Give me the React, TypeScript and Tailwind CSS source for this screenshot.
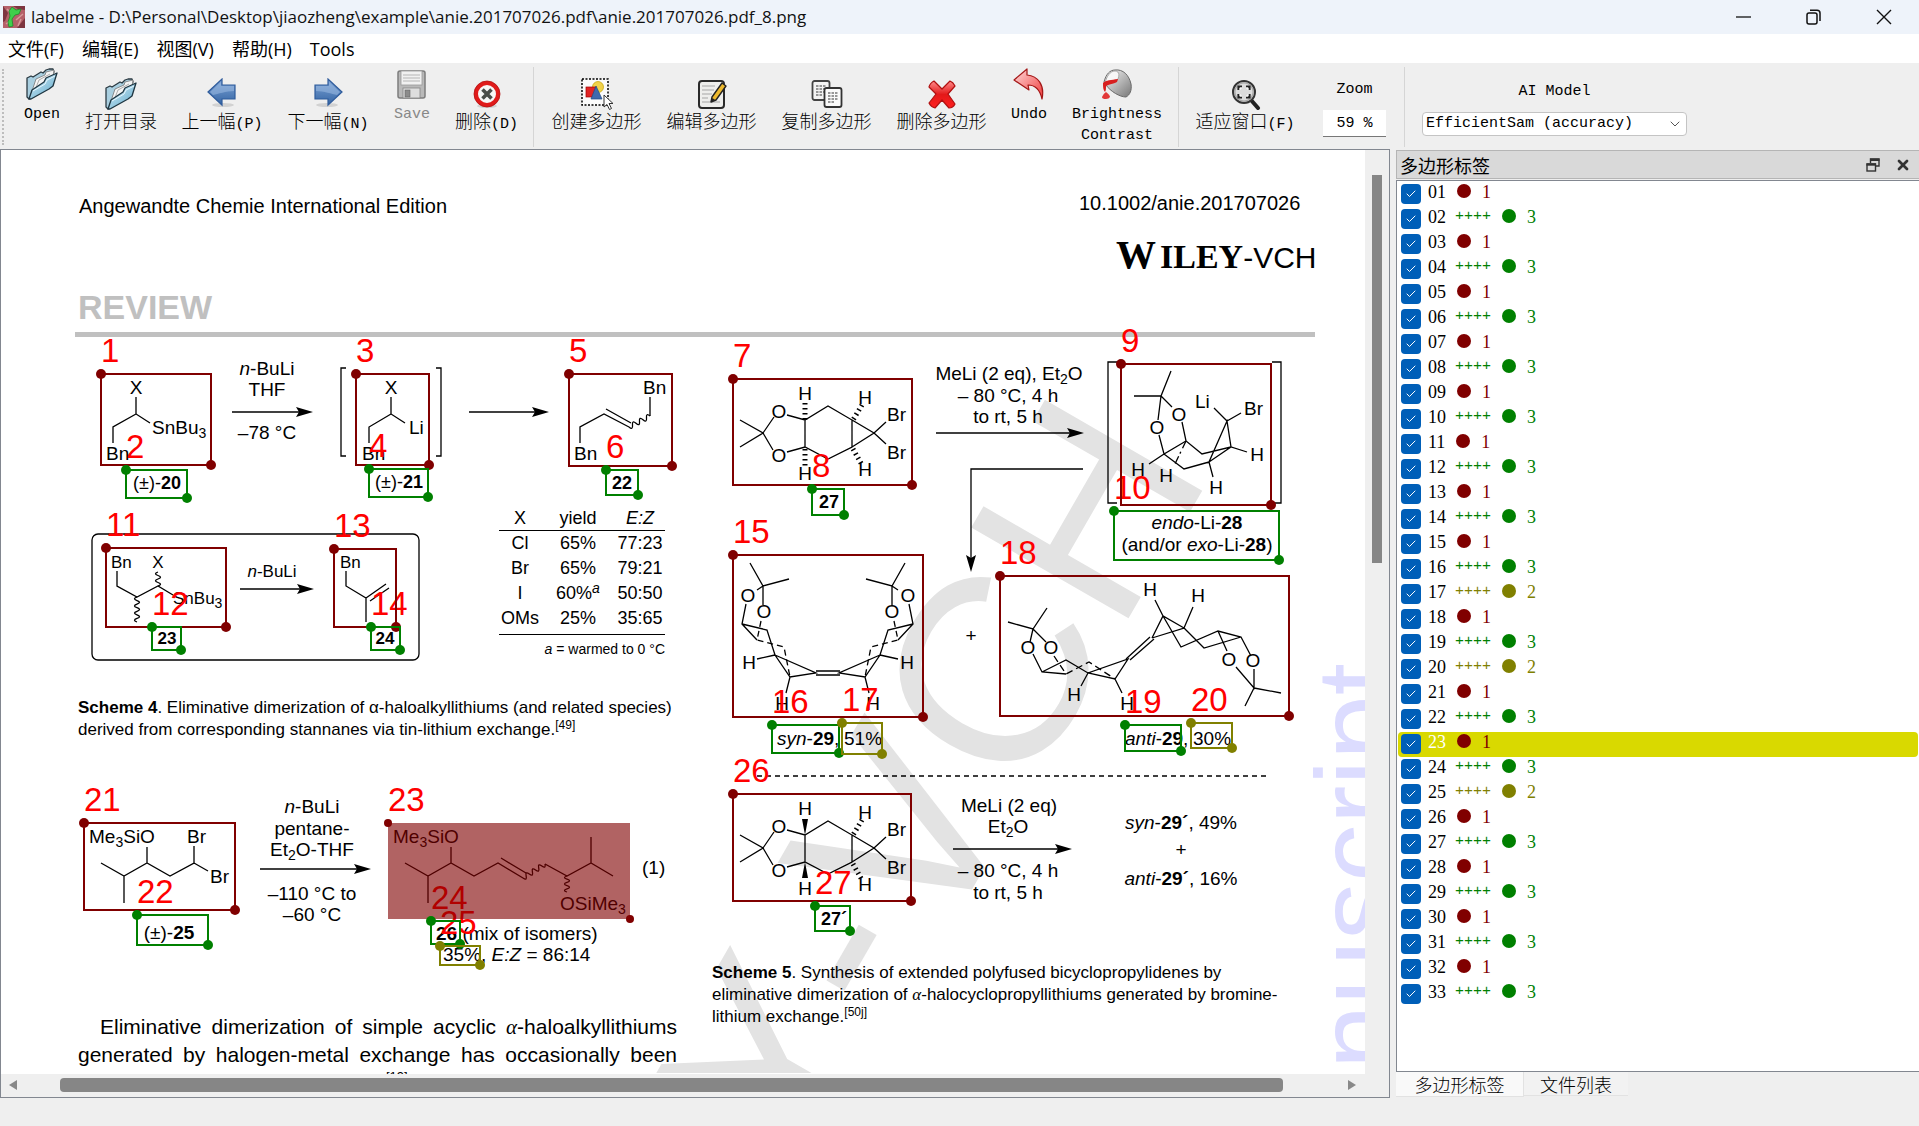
import React from "react";
import { Check, ChevronDown, X } from "lucide-react";

/* ------------------------------------------------------------------ */
/* Toolbar icons                                                        */
/* ------------------------------------------------------------------ */

function FolderIcon() {
  return (
    <svg viewBox="0 0 32 32" className="size-8">
      <defs>
        <linearGradient id="folder" x1="0" y1="0" x2="1" y2="1">
          <stop offset="0" stopColor="#d6eef8" />
          <stop offset="1" stopColor="#5fa9cb" />
        </linearGradient>
      </defs>
      <path d="M1 10 L5 8 L7 9 L15 4 L17 5 L20 2 L23 1 L27 1 L28 4 L3 31 L1 29 Z" fill="#a9cfe0" stroke="#2b3a42" strokeWidth="1.3" strokeLinejoin="round" />
      <path d="M5 26 L10 11 L19 7 L20 4 L28 2 L27 10 L8 22 Z" fill="#f4f4f4" stroke="#777" strokeWidth="0.8" />
      <path d="M9 22 L13 12 L24 6" fill="none" stroke="#999" strokeWidth="0.8" />
      <path d="M3 31 L6 22 L18 14 L20 10 L31 5 L27 18 L23 21 L5 31 Z" fill="url(#folder)" stroke="#1f3540" strokeWidth="1.3" strokeLinejoin="round" />
      <path d="M7 23 L19 16 L21 12 L29 8" fill="none" stroke="#e9f8ff" strokeWidth="1" />
    </svg>
  );
}

function ArrowIcon({ flip = false }: { flip?: boolean }) {
  return (
    <svg viewBox="0 0 32 32" className={flip ? "size-8 -scale-x-100" : "size-8"}>
      <defs>
        <linearGradient id="blueArrow" x1="0" y1="0" x2="0" y2="1">
          <stop offset="0" stopColor="#7fa4d6" />
          <stop offset="1" stopColor="#3465a4" />
        </linearGradient>
      </defs>
      <ellipse cx="17" cy="27" rx="11" ry="2" fill="#000" opacity="0.12" />
      <path d="M2 14 L16 1 L16 7 L29 7 L29 21 L16 21 L16 27 Z" fill="url(#blueArrow)" stroke="#2f5c9c" strokeWidth="1.2" />
      <path d="M4 14 L15 4 L15 8 L28 8 L28 13 C20 13 12 16 7 17 Z" fill="#9dbbe2" opacity="0.55" />
    </svg>
  );
}

function SaveIcon() {
  return (
    <svg viewBox="0 0 32 32" className="size-8">
      <rect x="2" y="3" width="27" height="27" rx="2" fill="#b9b9b9" stroke="#7d7d7d" strokeWidth="1.5" />
      <rect x="5" y="3" width="21" height="14" fill="#f1f1f1" stroke="#999" strokeWidth="0.8" />
      <path d="M7 7 H24 M7 10 H24 M7 13 H24" stroke="#b5b5b5" strokeWidth="1" />
      <rect x="7" y="20" width="17" height="10" fill="#dedede" stroke="#858585" strokeWidth="0.8" />
      <rect x="9" y="22" width="5" height="7" fill="#8b8b8b" stroke="#666" strokeWidth="0.6" />
    </svg>
  );
}

function CancelIcon() {
  return (
    <svg viewBox="0 0 32 32" className="size-8">
      <ellipse cx="16" cy="28" rx="10" ry="2" fill="#000" opacity="0.12" />
      <circle cx="16" cy="16" r="11" fill="#f7f7f7" stroke="#e01b1b" strokeWidth="4" />
      <circle cx="16" cy="16" r="13" fill="none" stroke="#b30f0f" strokeWidth="0.8" />
      <path d="M11.5 11.5 L20.5 20.5 M20.5 11.5 L11.5 20.5" stroke="#4a4d49" strokeWidth="3.6" />
    </svg>
  );
}

function CreateIcon() {
  return (
    <svg viewBox="0 0 32 32" className="size-8">
      <rect x="1" y="1" width="26" height="26" fill="#fbfbfb" stroke="#000" strokeWidth="1.5" strokeDasharray="2 1.5" />
      <circle cx="17" cy="9" r="5.5" fill="#f0d14a" stroke="#c4a000" strokeWidth="0.7" />
      <rect x="5" y="9" width="10" height="10" fill="#e02424" stroke="#a40000" strokeWidth="0.7" />
      <path d="M15 8 L21 21 H10 Z" fill="#3f69ad" stroke="#204a87" strokeWidth="0.7" />
      <path d="M23 17 V29 L26 26.5 L28.5 31.5 L30.5 30.5 L28 25.5 H32 Z" fill="#fff" stroke="#333" strokeWidth="1" />
    </svg>
  );
}

function EditIcon() {
  return (
    <svg viewBox="0 0 32 32" className="size-8">
      <rect x="3" y="3" width="25" height="27" rx="3" fill="#eeeeec" stroke="#2a2a2a" strokeWidth="2" />
      <path d="M6 8 H19 M6 12 H18 M6 16 H16 M6 20 H12 M6 24 H24" stroke="#a5a5a5" strokeWidth="1.2" />
      <path d="M16 19 L26 5 L30 8 L20 22 L15 24 Z" fill="#edb92e" stroke="#222" strokeWidth="1.4" strokeLinejoin="round" />
      <path d="M15 24 L16.5 20 L19 22 Z" fill="#222" />
    </svg>
  );
}

function CopyIcon() {
  return (
    <svg viewBox="0 0 32 32" className="size-8">
      <rect x="1.5" y="3" width="17" height="19" rx="2" fill="#f3f3f3" stroke="#444" strokeWidth="1.8" />
      <path d="M5 8 H15 M5 11 H15 M5 14 H15 M5 17 H12" stroke="#777" strokeWidth="1.3" strokeDasharray="2.5 1" />
      <rect x="13.5" y="10" width="17" height="19" rx="2" fill="#fafafa" stroke="#333" strokeWidth="1.8" />
      <path d="M17 15 H27 M17 18 H27 M17 21 H27 M17 24 H24" stroke="#777" strokeWidth="1.3" strokeDasharray="2.5 1" />
    </svg>
  );
}

function DeleteIcon() {
  return (
    <svg viewBox="0 0 32 32" className="size-8">
      <defs>
        <linearGradient id="redCross" x1="0" y1="0" x2="0" y2="1">
          <stop offset="0" stopColor="#ff8c8c" />
          <stop offset="0.5" stopColor="#e31919" />
          <stop offset="1" stopColor="#ff1f1f" />
        </linearGradient>
      </defs>
      <path d="M8 3 Q4 5 3 9 L10 16 L3 25 Q5 29 9 30 L16 22 L23 30 Q27 30 29 26 L22 16 L29 8 Q27 4 24 3 L16 11 Z" fill="url(#redCross)" stroke="#b01010" strokeWidth="1.2" strokeLinejoin="round" />
    </svg>
  );
}

function UndoIcon() {
  return (
    <svg viewBox="0 0 32 32" className="size-8">
      <defs>
        <linearGradient id="undo" x1="0" y1="0" x2="1" y2="1">
          <stop offset="0" stopColor="#ffd9d9" />
          <stop offset="1" stopColor="#ef3b3b" />
        </linearGradient>
      </defs>
      <path d="M1 12 L14 1 L14 7 C25 8 32 17 29 31 C27 22 22 17 15 17 L16 22 Z" fill="url(#undo)" stroke="#a31616" strokeWidth="1.2" strokeLinejoin="round" />
    </svg>
  );
}

function BucketIcon() {
  return (
    <svg viewBox="0 0 32 32" className="size-8">
      <defs>
        <linearGradient id="bucket" x1="0" y1="0" x2="1" y2="1">
          <stop offset="0" stopColor="#fafafa" />
          <stop offset="1" stopColor="#777" />
        </linearGradient>
      </defs>
      <path d="M3 14 C5 6 9 2 14 2 C22 1 28 7 30 16 C31 22 29 27 25 29 C19 29 10 24 4 16 Z" fill="url(#bucket)" stroke="#6a6a6a" strokeWidth="1" />
      <path d="M4 16 C5 9 9 3 14 3 C19 3 19 9 15 14 Z" fill="#f7f7f7" stroke="#999" strokeWidth="0.8" />
      <path d="M2 15 C5 12 10 12 17 11 L16 14 C12 16 9 16 5 18 C5 21 5 22 4 24 C2 22 2 19 2 15 Z" fill="#d81f1f" />
      <path d="M5 24 Q9 27 9 29 Q8 31 5 31 Q1 31 1 29 Q2 26 5 24 Z" fill="#e23838" />
    </svg>
  );
}

function FitIcon() {
  return (
    <svg viewBox="0 0 32 32" className="size-8">
      <path d="M22 22 L29 30" stroke="#222" strokeWidth="4" strokeLinecap="round" />
      <circle cx="15" cy="14" r="11" fill="#dcdcdc" stroke="#333" strokeWidth="2" />
      <circle cx="15" cy="14" r="9.2" fill="none" stroke="#aaa" strokeWidth="1.4" />
      <path d="M9.5 12 V8.5 H13 M17 8.5 H20.5 V12 M20.5 16 V19.5 H17 M13 19.5 H9.5 V16" fill="none" stroke="#222" strokeWidth="2.2" />
      <path d="M11 12 V10 H13 M17 10 H19 V12 M19 16 V18 H17 M13 18 H11 V16" fill="none" stroke="#fff" strokeWidth="1" />
    </svg>
  );
}

function LogoIcon() {
  return (
    <svg viewBox="0 0 22 22" className="size-[22px]">
      <rect width="22" height="22" fill="#b5616a" />
      <path d="M0 0 L5 7 L2 15 L0 16 Z M10 0 L22 0 L22 4 L15 3 Z M14 22 L22 12 L22 22 Z" fill="#7d3540" />
      <path d="M4 3 L11 10 M13 14 L20 8 M3 18 L8 14 M15 20 L18 13" stroke="#d79a9a" strokeWidth="1.5" />
      <path d="M9 1 L13 4 L18 3 L16 8 L12 9 L9 13 L10 20 L6 21 L5 16 L7 10 L6 5 Z" fill="#3fd04b" stroke="#1f8a2c" strokeWidth="0.8" />
    </svg>
  );
}

/* ------------------------------------------------------------------ */
/* Window chrome                                                        */
/* ------------------------------------------------------------------ */

function Mixed({ text }: { text: string }) {
  return (
    <>
      {text.split(/([\u4e00-\u9fff]+)/).map((part, i) =>
        i % 2 ? (
          <span key={i} className="font-['Noto_Sans_CJK_SC',sans-serif] text-[18px] font-light">{part}</span>
        ) : (
          part
        ),
      )}
    </>
  );
}

function TitleBar() {
  return (
    <header className="flex h-[34px] shrink-0 items-center bg-[#eef3fa] pl-[3px]">
      <LogoIcon />
      <h1 className="ml-1.5 flex-1 font-['Open_Sans',sans-serif] text-[17px] leading-6 text-[#111]">
        labelme - D:\Personal\Desktop\jiaozheng\example\anie.201707026.pdf\anie.201707026.pdf_8.png
      </h1>
      <button aria-label="Minimize" className="flex w-[70px] justify-center">
        <svg viewBox="0 0 16 16" className="size-4"><path d="M0 8 H15" stroke="#111" strokeWidth="1.3" /></svg>
      </button>
      <button aria-label="Restore" className="flex w-[70px] justify-center">
        <svg viewBox="0 0 16 16" className="size-4" fill="none" stroke="#111" strokeWidth="1.5">
          <rect x="1" y="4" width="10" height="11" rx="2" />
          <path d="M4 1.2 H11 Q14 1.2 14 4 V12" />
        </svg>
      </button>
      <button aria-label="Close" className="flex w-[70px] justify-center">
        <svg viewBox="0 0 16 16" className="size-4"><path d="M1 1 L15 15 M15 1 L1 15" stroke="#111" strokeWidth="1.4" /></svg>
      </button>
    </header>
  );
}

function MenuBar() {
  return (
    <nav className="flex h-[31px] shrink-0 items-center gap-[18px] border-b-2 border-[#efefef] bg-white pl-2 font-['Open_Sans','Noto_Sans_CJK_SC',sans-serif] text-[18px] leading-6 text-black">
      {["文件(F)", "编辑(E)", "视图(V)", "帮助(H)", "Tools"].map((m) => (
        <button key={m} className="whitespace-nowrap">{m}</button>
      ))}
    </nav>
  );
}

type ToolProps = { icon: React.ReactNode; label: string; width: string; high?: boolean; disabled?: boolean };

function Tool({ icon, label, width, high = false, disabled = false }: ToolProps) {
  return (
    <button
      disabled={disabled}
      className={`flex shrink-0 flex-col items-center leading-[21px] ${high ? "gap-1 pt-[3px]" : "gap-0 pt-[13px]"} ${disabled ? "text-[#888]" : "text-black"} ${width}`}
    >
      {icon}
      <span className="whitespace-pre text-center"><Mixed text={label} /></span>
    </button>
  );
}

function Separator() {
  return <div className="my-0.5 w-px shrink-0 bg-[#d5d5d5]" />;
}

function Toolbar() {
  return (
    <div role="toolbar" className="flex h-[84px] shrink-0 items-stretch bg-[#efefef] font-['Liberation_Mono',monospace] text-[15px]">
      <div className="my-1 ml-0.5 w-3 shrink-0 border-l-2 border-dotted border-[#bdbdbd]" />
      <div className="flex items-start">
        <Tool icon={<FolderIcon />} label="Open" width="w-[56px]" high />
        <Tool icon={<FolderIcon />} label="打开目录" width="w-[102px]" />
        <Tool icon={<ArrowIcon />} label="上一幅(P)" width="w-[100px]" />
        <Tool icon={<ArrowIcon flip />} label="下一幅(N)" width="w-[112px]" />
        <Tool icon={<SaveIcon />} label="Save" width="w-[56px]" high disabled />
        <Tool icon={<CancelIcon />} label="删除(D)" width="w-[93px]" />
      </div>
      <Separator />
      <div className="flex items-start pl-[5px] pr-[3px]">
        <Tool icon={<CreateIcon />} label="创建多边形" width="w-[115px]" />
        <Tool icon={<EditIcon />} label="编辑多边形" width="w-[115px]" />
        <Tool icon={<CopyIcon />} label="复制多边形" width="w-[115px]" />
        <Tool icon={<DeleteIcon />} label="删除多边形" width="w-[115px]" />
        <Tool icon={<UndoIcon />} label="Undo" width="w-[60px]" high />
        <Tool icon={<BucketIcon />} label={"Brightness\nContrast"} width="w-[116px]" high />
      </div>
      <Separator />
      <div className="flex items-start pl-2">
        <Tool icon={<FitIcon />} label="适应窗口(F)" width="w-[116px]" />
      </div>
      <div className="ml-5 flex w-[63px] flex-col items-center pt-[13px]">
        <label htmlFor="zoom" className="leading-6">Zoom</label>
        <input id="zoom" defaultValue="59 %" className="mt-2 h-[27px] w-full border-b border-[#777] bg-white text-center outline-none" />
      </div>
      <div className="ml-[18px] flex"><Separator /></div>
      <div className="ml-[17px] flex w-[265px] flex-col items-center pt-[15px]">
        <label htmlFor="model" className="leading-6">AI Model</label>
        <div className="mt-2 grid w-full items-center">
          <select id="model" className="h-6 w-full appearance-none rounded-sm border border-[#c4c4c4] bg-white pl-[3px] outline-none [grid-area:1/1]">
            <option>EfficientSam (accuracy)</option>
          </select>
          <ChevronDown className="pointer-events-none mr-1 size-4 justify-self-end [grid-area:1/1]" strokeWidth={1.5} color="#555" />
        </div>
      </div>
    </div>
  );
}

/* ------------------------------------------------------------------ */
/* Chemistry drawing helpers                                            */
/* ------------------------------------------------------------------ */

type TextProps = { x: number; y: number; children: React.ReactNode; at?: "start" | "middle" | "end"; size?: string };

function T({ x, y, children, at = "start", size = "text-[19px]" }: TextProps) {
  return <text x={x} y={y} textAnchor={at} className={`fill-black ${size}`}>{children}</text>;
}

function Sub({ n }: { n: string }) {
  return <tspan dy="4" className="text-[14px]">{n}</tspan>;
}

const B = ({ children }: { children: React.ReactNode }) => <tspan className="font-bold">{children}</tspan>;
const I = ({ children }: { children: React.ReactNode }) => <tspan className="italic">{children}</tspan>;

function Arrow({ x1, x2, y }: { x1: number; x2: number; y: number }) {
  return (
    <>
      <path d={`M${x1} ${y} H${x2 - 12}`} />
      <path d={`M${x2} ${y} L${x2 - 17} ${y - 5} L${x2 - 14} ${y} L${x2 - 17} ${y + 5} Z`} fill="#000" stroke="none" />
    </>
  );
}

function Wavy({ x1, y1, x2, y2, n }: { x1: number; y1: number; x2: number; y2: number; n: number }) {
  const dx = (x2 - x1) / n;
  const dy = (y2 - y1) / n;
  const len = Math.hypot(dx, dy);
  let d = `M${x1} ${y1}`;
  for (let i = 0; i < n; i++) {
    const s = i % 2 ? -5 : 5;
    const cx = x1 + dx * (i + 0.5) - (dy / len) * s;
    const cy = y1 + dy * (i + 0.5) + (dx / len) * s;
    d += ` Q${cx} ${cy} ${x1 + dx * (i + 1)} ${y1 + dy * (i + 1)}`;
  }
  return <path d={d} />;
}

function Acetonide({ dy, wedge }: { dy: number; wedge: boolean }) {
  return (
    <g transform={`translate(0 ${dy})`}>
      <path d="M740 420 L763 433 L740 447 M763 433 L774 417 M763 433 L773 450 M787 415 L805 420 L828 406 L852 420 L852 447 L828 459 L805 447 L787 452 M805 420 V447 M852 420 L874 433 L852 447 M874 433 L886 422 M874 433 L886 444" />
      {wedge ? (
        <path d="M805 420 L802 404 H808 Z M805 447 L802 463 H808 Z" fill="#000" stroke="none" />
      ) : (
        <path d="M805 403 V420 M805 449 V466" strokeWidth="5" strokeDasharray="1.5 3.5" />
      )}
      <path d="M862 405 L853 420 M853 449 L862 465" strokeWidth="5" strokeDasharray="1.5 3.5" />
      <g stroke="none">
        <T x={805} y={400} at="middle">H</T>
        <T x={865} y={404} at="middle">H</T>
        <T x={805} y={480} at="middle">H</T>
        <T x={865} y={476} at="middle">H</T>
        <T x={779} y={418} at="middle">O</T>
        <T x={779} y={462} at="middle">O</T>
        <T x={887} y={421}>Br</T>
        <T x={887} y={459}>Br</T>
      </g>
    </g>
  );
}

const SYN_HALF =
  "M750 563 L763 586 L789 579 M763 586 L757 590 M763 586 V605 M746 604 L742 624 L757 640 M742 624 L767 630 L775 655 L790 677 L816 673 L775 655 M775 655 L757 659 M790 677 L786 693";

function Watermarks() {
  return (
    <>
      <text x={1213} y={472} textAnchor="end" transform="rotate(-60 1213 472)" className="fill-[#e3e3e3] text-[264px] [font-kerning:none]">WILEY-VCH</text>
      <text x={1398} y={663} textAnchor="end" transform="rotate(-90 1398 663)" className="fill-[#dcdcff] text-[116px]">Accepted Manuscript</text>
    </>
  );
}

function Scheme4() {
  return (
    <g fill="none" stroke="#000" strokeWidth="1.3">
      <path d="M136 397 V414 L150 423 M136 414 L113 427 V443" />
      <Arrow x1={232} x2={313} y={412} />
      <path d="M346 368 H341 V456 H346 M436 368 H441 V456 H436" />
      <path d="M391 397 V414 L405 423 M391 414 L369 427 V443" />
      <Arrow x1={469} x2={549} y={412} />
      <path d="M650 397 V416 M629 427 L604 414 L580 427 V443 M606 409 L631 423" />
      <Wavy x1={650} y1={416} x2={629} y2={427} n={6} />
      <rect x="92" y="534" width="327" height="126" rx="6" />
      <path d="M117 571 V586 L137 597 L158 586 L173 595" />
      <Wavy x1={158} y1={572} x2={158} y2={586} n={4} />
      <Wavy x1={137} y1={597} x2={137} y2={622} n={7} />
      <Arrow x1={240} x2={314} y={589} />
      <path d="M346 571 V586 L366 598 L386 584 M370 601 L389 588 M366 598 V622" />
      <g stroke="none">
        <T x={136} y={394} at="middle">X</T>
        <T x={152} y={434}>SnBu<Sub n="3" /></T>
        <T x={106} y={460}>Bn</T>
        <T x={267} y={375} at="middle"><I>n</I>-BuLi</T>
        <T x={267} y={396} at="middle">THF</T>
        <T x={267} y={439} at="middle">–78 °C</T>
        <T x={391} y={394} at="middle">X</T>
        <T x={409} y={434}>Li</T>
        <T x={362} y={460}>Bn</T>
        <T x={643} y={394}>Bn</T>
        <T x={574} y={460}>Bn</T>
        <T x={157} y={489} at="middle" size="text-[18px]">(±)-<B>20</B></T>
        <T x={399} y={488} at="middle" size="text-[18px]">(±)-<B>21</B></T>
        <T x={622} y={489} at="middle" size="text-[18px]"><B>22</B></T>
        <T x={111} y={568} size="text-[17px]">Bn</T>
        <T x={158} y={568} at="middle" size="text-[17px]">X</T>
        <T x={173} y={604} size="text-[17px]">SnBu<Sub n="3" /></T>
        <T x={272} y={577} at="middle" size="text-[17px]"><I>n</I>-BuLi</T>
        <T x={340} y={568} size="text-[17px]">Bn</T>
        <T x={167} y={644} at="middle" size="text-[17px]"><B>23</B></T>
        <T x={385} y={644} at="middle" size="text-[17px]"><B>24</B></T>
      </g>
    </g>
  );
}

function Equation1() {
  return (
    <g fill="none" stroke="#000" strokeWidth="1.3">
      <path d="M101 863 L124 876 L147 863 L170 876 L194 863 V846 M147 847 V863 M194 863 L208 871 M124 876 V903" />
      <Arrow x1={260} x2={371} y={869} />
      <path d="M405 863 L428 876 L451 863 L474 876 L498 863 L523 878 M451 847 V863 M428 876 V903 M501 858 L526 873 M545 864 L567 876 L591 863 L613 876 M591 863 V837" />
      <Wavy x1={523} y1={878} x2={545} y2={864} n={7} />
      <Wavy x1={567} y1={876} x2={567} y2={892} n={5} />
      <g stroke="none">
        <T x={89} y={843}>Me<Sub n="3" /><tspan dy="-4">SiO</tspan></T>
        <T x={187} y={843}>Br</T>
        <T x={210} y={883}>Br</T>
        <T x={169} y={939} at="middle"><tspan>(±)-</tspan><B>25</B></T>
        <T x={312} y={813} at="middle"><I>n</I>-BuLi</T>
        <T x={312} y={835} at="middle">pentane-</T>
        <T x={312} y={856} at="middle">Et<Sub n="2" /><tspan dy="-4">O-THF</tspan></T>
        <T x={312} y={900} at="middle">–110 °C to</T>
        <T x={312} y={921} at="middle">–60 °C</T>
        <T x={393} y={843}>Me<Sub n="3" /><tspan dy="-4">SiO</tspan></T>
        <T x={560} y={910}>OSiMe<Sub n="3" /></T>
        <T x={642} y={874}>(1)</T>
        <T x={436} y={940}><B>26</B> (mix of isomers)</T>
        <T x={443} y={961}>35%, <I>E:Z</I> = 86:14</T>
      </g>
    </g>
  );
}

function Scheme5() {
  return (
    <g fill="none" stroke="#000" strokeWidth="1.3">
      <Acetonide dy={0} wedge={false} />
      <Arrow x1={936} x2={1084} y={433} />
      <path d="M1083 469 H971 V560" />
      <path d="M971 572 L966 555 L971 558 L976 555 Z" fill="#000" stroke="none" />
      <path d="M1117 362 H1108 V503 H1117 M1272 362 H1281 V503 H1272" />
      <path d="M1171 371 L1161 396 H1134 M1161 396 L1172 407 M1161 396 L1158 420 M1182 422 L1186 441 L1202 454 L1231 447 L1227 421 L1209 462 L1231 447 L1247 452 M1159 435 L1164 454 L1186 441 M1209 462 L1184 469 L1164 454 L1149 464 M1209 462 L1213 477 M1227 421 L1214 408 M1227 421 L1241 413" />
      <path d="M1186 441 L1174 466" strokeDasharray="8 4 2 3" />
      <path d={SYN_HALF} />
      <g transform="translate(1655 0) scale(-1 1)"><path d={SYN_HALF} /></g>
      <path d="M816 671 H840 M816 675 H840" />
      <path d="M761 621 L757 640 L784 647 L790 677 M894 621 L898 640 L871 647 L865 677" strokeDasharray="6 4" />
      <path d="M1047 608 L1033 629 L1008 622 M1033 629 L1030 642 M1033 629 L1046 642 M1033 654 L1042 672 L1066 674 M1042 672 L1066 660 L1088 673 L1115 679 L1128 659 L1088 673 L1081 686 M1115 679 L1122 693" />
      <path d="M1054 656 L1066 674 L1089 662 L1115 679" strokeDasharray="7 4" />
      <path d="M1126 659 L1150 637 M1130 660 L1154 639 M1152 638 L1163 616 L1184 628 L1152 638 M1163 616 L1155 600 M1184 628 L1193 607 M1163 616 L1181 647 L1218 631 L1241 637 L1251 656 M1184 628 L1204 648 L1241 637 M1218 631 L1227 651 M1236 667 L1254 688 V669 M1254 688 L1281 693 M1254 688 L1245 706" />
      <path d="M757 776 H1269" strokeDasharray="5 4" />
      <Acetonide dy={415} wedge />
      <Arrow x1={953} x2={1072} y={849} />
      <g stroke="none">
        <T x={829} y={508} at="middle" size="text-[18px]"><B>27</B></T>
        <T x={1009} y={380} at="middle">MeLi (2 eq), Et<Sub n="2" /><tspan dy="-4">O</tspan></T>
        <T x={1008} y={402} at="middle">– 80 °C, 4 h</T>
        <T x={1008} y={423} at="middle">to rt, 5 h</T>
        <T x={1195} y={408}>Li</T>
        <T x={1244} y={415}>Br</T>
        <T x={1179} y={421} at="middle">O</T>
        <T x={1157} y={434} at="middle">O</T>
        <T x={1257} y={461} at="middle">H</T>
        <T x={1138} y={476} at="middle">H</T>
        <T x={1166} y={482} at="middle">H</T>
        <T x={1216} y={494} at="middle">H</T>
        <T x={1197} y={529} at="middle"><I>endo</I>-Li-<B>28</B></T>
        <T x={1197} y={551} at="middle">(and/or <I>exo</I>-Li-<B>28</B>)</T>
        <T x={748} y={602} at="middle">O</T>
        <T x={764} y={618} at="middle">O</T>
        <T x={908} y={602} at="middle">O</T>
        <T x={892} y={618} at="middle">O</T>
        <T x={749} y={669} at="middle">H</T>
        <T x={907} y={669} at="middle">H</T>
        <T x={782} y={710} at="middle">H</T>
        <T x={873} y={710} at="middle">H</T>
        <T x={971} y={642} at="middle">+</T>
        <T x={1028} y={654} at="middle">O</T>
        <T x={1051} y={654} at="middle">O</T>
        <T x={1074} y={701} at="middle">H</T>
        <T x={1127} y={710} at="middle">H</T>
        <T x={1150} y={596} at="middle">H</T>
        <T x={1198} y={602} at="middle">H</T>
        <T x={1229} y={666} at="middle">O</T>
        <T x={1253} y={667} at="middle">O</T>
        <T x={777} y={745}><I>syn</I>-<B>29</B>,</T>
        <T x={844} y={745}>51%</T>
        <T x={1125} y={745}><I>anti</I>-<B>29</B>,</T>
        <T x={1193} y={745}>30%</T>
        <T x={1009} y={812} at="middle">MeLi (2 eq)</T>
        <T x={1008} y={833} at="middle">Et<Sub n="2" /><tspan dy="-4">O</tspan></T>
        <T x={1008} y={877} at="middle">– 80 °C, 4 h</T>
        <T x={1008} y={899} at="middle">to rt, 5 h</T>
        <T x={1181} y={829} at="middle"><I>syn</I>-<B>29´</B>, 49%</T>
        <T x={1181} y={856} at="middle">+</T>
        <T x={1181} y={885} at="middle"><I>anti</I>-<B>29´</B>, 16%</T>
        <T x={821} y={925} size="text-[18px]"><B>27´</B></T>
      </g>
    </g>
  );
}

/* ------------------------------------------------------------------ */
/* Annotations                                                          */
/* ------------------------------------------------------------------ */

const RED = "#800000";
const GREEN = "#008000";
const OLIVE = "#808000";

type Shape = { id: number; c: string; p: [number, number, number, number]; selected?: boolean };

const SHAPES: Shape[] = [
  { id: 1, c: RED, p: [101, 374, 211, 465] },
  { id: 2, c: GREEN, p: [126, 470, 187, 498] },
  { id: 3, c: RED, p: [356, 374, 429, 465] },
  { id: 4, c: GREEN, p: [369, 469, 428, 497] },
  { id: 5, c: RED, p: [569, 374, 672, 466] },
  { id: 6, c: GREEN, p: [606, 470, 638, 495] },
  { id: 7, c: RED, p: [733, 379, 912, 485] },
  { id: 8, c: GREEN, p: [812, 489, 844, 515] },
  { id: 9, c: RED, p: [1121, 364, 1271, 505] },
  { id: 10, c: GREEN, p: [1114, 511, 1279, 560] },
  { id: 11, c: RED, p: [106, 548, 226, 627] },
  { id: 12, c: GREEN, p: [152, 627, 181, 650] },
  { id: 13, c: RED, p: [334, 549, 396, 627] },
  { id: 14, c: GREEN, p: [371, 627, 400, 650] },
  { id: 15, c: RED, p: [733, 555, 923, 717] },
  { id: 16, c: GREEN, p: [772, 725, 839, 753] },
  { id: 17, c: OLIVE, p: [842, 723, 882, 754] },
  { id: 18, c: RED, p: [1000, 576, 1289, 716] },
  { id: 19, c: GREEN, p: [1125, 725, 1181, 751] },
  { id: 20, c: OLIVE, p: [1191, 723, 1232, 748] },
  { id: 21, c: RED, p: [84, 823, 235, 910] },
  { id: 22, c: GREEN, p: [137, 915, 208, 945] },
  { id: 23, c: RED, p: [388, 823, 630, 919], selected: true },
  { id: 24, c: GREEN, p: [431, 921, 460, 944] },
  { id: 25, c: OLIVE, p: [440, 946, 480, 965] },
  { id: 26, c: RED, p: [733, 794, 911, 901] },
  { id: 27, c: GREEN, p: [815, 906, 850, 931] },
];

function Annotations() {
  return (
    <>
      {SHAPES.map(({ id, p }) => (
        <text key={id} x={p[0]} y={p[1] - 12} className="fill-[#ff0000] text-[33px]">{id}</text>
      ))}
      {SHAPES.map(({ id, c, p, selected }) => (
        <g key={id}>
          <rect
            x={p[0]}
            y={p[1]}
            width={p[2] - p[0]}
            height={p[3] - p[1]}
            fill={selected ? c : "none"}
            fillOpacity={0.61}
            stroke={selected ? "none" : c}
            strokeWidth="2"
          />
          <circle cx={p[0]} cy={p[1]} r={selected ? 4 : 5} fill={c} />
          <circle cx={p[2]} cy={p[3]} r={selected ? 4 : 5} fill={c} />
        </g>
      ))}
    </>
  );
}

/* ------------------------------------------------------------------ */
/* Scanned page                                                         */
/* ------------------------------------------------------------------ */

const YIELDS: [string, React.ReactNode, string][] = [
  ["Cl", "65%", "77:23"],
  ["Br", "65%", "79:21"],
  ["I", <>60%<i className="relative -top-1.5 text-[14px] leading-none">a</i></>, "50:50"],
  ["OMs", "25%", "35:65"],
];

function ScanText() {
  return (
    <div className="text-black">
      <p className="absolute left-[78px] top-[44px] text-[20px] leading-6">Angewandte Chemie International Edition</p>
      <p className="absolute left-[1078px] top-[41px] text-[20px] leading-6">10.1002/anie.201707026</p>
      <p className="absolute left-[1115px] top-[85px] flex items-baseline font-['Liberation_Serif',serif] leading-10">
        <span className="text-[40px] font-bold">W</span>
        <span className="ml-1 text-[34px] font-bold">ILEY</span>
        <span className="font-['Liberation_Sans',sans-serif] text-[30px]">-VCH</span>
      </p>
      <h2 className="absolute left-[77px] top-[135px] text-[34px] font-bold leading-[44px] text-[#c0c0c0]">REVIEW</h2>
      <div className="absolute left-[74px] top-[182px] h-[5px] w-[1240px] bg-[#c0c0c0]" />

      <table className="absolute left-[498px] top-[357px] w-[166px] border-collapse text-center text-[18px] leading-[25px]">
        <thead>
          <tr className="border-b border-black leading-[23px]">
            <th className="w-[42px] p-0 font-normal">X</th>
            <th className="p-0 font-normal">yield</th>
            <th className="w-[50px] p-0 font-normal italic">E:Z</th>
          </tr>
        </thead>
        <tbody className="border-b border-black">
          {YIELDS.map(([x, y, z]) => (
            <tr key={x} className="h-[25px]">
              <td className="p-0">{x}</td>
              <td className="whitespace-nowrap p-0">{y}</td>
              <td className="p-0">{z}</td>
            </tr>
          ))}
          <tr className="h-[3px]" />
        </tbody>
        <tfoot>
          <tr>
            <td colSpan={3} className="whitespace-nowrap p-0 text-right text-[14px] leading-7"><i>a</i> = warmed to 0 °C</td>
          </tr>
        </tfoot>
      </table>

      <p className="absolute left-[77px] top-[547px] whitespace-nowrap text-[17px] leading-[22px]">
        <b>Scheme 4</b>. Eliminative dimerization of α-haloalkyllithiums (and related species)
        <br />
        derived from corresponding stannanes via tin-lithium exchange.<span className="relative -top-1.5 text-[12px] leading-none">[49]</span>
      </p>
      <p className="absolute left-[711px] top-[812px] whitespace-nowrap text-[17px] leading-[22px]">
        <b>Scheme 5</b>. Synthesis of extended polyfused bicyclopropylidenes by
        <br />
        eliminative dimerization of <i className="font-['Liberation_Serif',serif]">α</i>-halocyclopropyllithiums generated by bromine-
        <br />
        lithium exchange.<span className="relative -top-1.5 text-[12px] leading-none">[50j]</span>
      </p>
      <div className="absolute left-[77px] top-[863px] w-[599px] text-[21px] leading-7">
        <p className="pl-[22px] [text-align-last:justify]">
          Eliminative dimerization of simple acyclic <i className="font-['Liberation_Serif',serif]">α</i>-haloalkyllithiums
        </p>
        <p className="[text-align-last:justify]">generated by halogen-metal exchange has occasionally been</p>
        <p className="pl-[308px] text-[13px] leading-4">[19]</p>
      </div>
    </div>
  );
}

function Canvas() {
  return (
    <section aria-label="Canvas" className="grid min-w-0 flex-1 grid-cols-[1fr_24px] grid-rows-[1fr_23px] overflow-hidden border border-[#828790] bg-[#efefef]">
      <div className="relative min-h-0 overflow-hidden bg-white font-['Liberation_Sans',Arial,sans-serif]">
        <svg viewBox="1 150 1364 923" className="absolute left-0 top-0 h-[923px] w-[1364px]">
          <Watermarks />
        </svg>
        <ScanText />
        <svg viewBox="1 150 1364 923" className="absolute left-0 top-0 h-[923px] w-[1364px]">
          <Scheme4 />
          <Equation1 />
          <Scheme5 />
          <Annotations />
        </svg>
      </div>
      <div className="flex justify-center pt-[25px]">
        <div className="h-[388px] w-[10px] bg-[#868686]" />
      </div>
      <div className="flex items-center pb-0.5 pl-2 pr-[9px]">
        <span className="size-0 border-y-[5px] border-r-[8px] border-y-transparent border-r-[#888]" />
        <div className="ml-[43px] mr-[65px] h-[14px] flex-1 rounded-sm bg-[#868686]" />
        <span className="size-0 border-y-[5px] border-l-[8px] border-y-transparent border-l-[#888]" />
      </div>
      <div />
    </section>
  );
}

/* ------------------------------------------------------------------ */
/* Label dock                                                           */
/* ------------------------------------------------------------------ */

const LABELS = [1, 3, 1, 3, 1, 3, 1, 3, 1, 3, 1, 3, 1, 3, 1, 3, 2, 1, 3, 2, 1, 3, 1, 3, 2, 1, 3, 1, 3, 1, 3, 1, 3];
const TEXT_COLOR: Record<number, string> = { 1: "text-[#800000]", 2: "text-[#808000]", 3: "text-[#008000]" };
const DOT_COLOR: Record<number, string> = { 1: "bg-[#800000]", 2: "bg-[#808000]", 3: "bg-[#008000]" };

function LabelRow({ index, kind }: { index: number; kind: number }) {
  const selected = index === 23;
  return (
    <li className={`h-[25px] rounded-sm ${selected ? "bg-[#d9d900]" : ""}`}>
      <label className="flex items-start pl-[3px] font-['Liberation_Serif',serif] text-[18px] leading-5">
        <span className="mt-0.5 grid size-5 place-items-center">
          <input type="checkbox" defaultChecked className="size-5 appearance-none rounded bg-[#005fb8] [grid-area:1/1]" />
          <Check className="pointer-events-none size-3 [grid-area:1/1]" color="#fff" strokeWidth={2} />
        </span>
        <span className={`ml-[7px] ${selected ? "text-white" : "text-black"}`}>{String(index).padStart(2, "0")}</span>
        {kind !== 1 && <span className={`ml-[9px] font-['Liberation_Mono',monospace] text-[15px] ${TEXT_COLOR[kind]}`}>++++</span>}
        <span className={`ml-[11px] mt-0.5 size-[14px] rounded-full ${DOT_COLOR[kind]}`} />
        <span className={`ml-[11px] ${TEXT_COLOR[kind]}`}>{kind}</span>
      </label>
    </li>
  );
}

function LabelDock() {
  return (
    <aside className="flex w-[523px] shrink-0 flex-col font-['Noto_Sans_CJK_SC',sans-serif] text-[18px] text-black">
      <div className="mt-px flex h-[29px] items-center border border-r-0 border-[#b5b5b5] bg-[#d9d9d9] pl-[3px] pr-2">
        <h2 className="flex-1 leading-6">多边形标签</h2>
        <button aria-label="Float">
          <svg viewBox="0 0 14 14" className="size-[14px]" fill="none" stroke="#333" strokeWidth="1.4">
            <path d="M4.5 5 V1 H13 V8 H9.5" />
            <path d="M4 1.8 H13.5" strokeWidth="2.4" />
            <rect x="1" y="6" width="8.5" height="7" />
            <path d="M0.5 6.5 H10" strokeWidth="2.4" />
          </svg>
        </button>
        <button aria-label="Close dock" className="ml-[15px]"><X className="size-4" strokeWidth={4} color="#333" /></button>
      </div>
      <ul className="mt-px flex-1 border border-r-0 border-[#828790] bg-white px-px pt-px">
        {LABELS.map((k, i) => (
          <LabelRow key={i} index={i + 1} kind={k} />
        ))}
      </ul>
      <div role="tablist" className="flex h-[26px] items-start font-light">
        <button role="tab" aria-selected="true" className="h-[25px] w-32 border-b border-r border-[#e2e2e2] bg-[#f9f9f9] leading-[22px]">多边形标签</button>
        <button role="tab" aria-selected="false" className="h-6 w-[104px] border-b border-[#e2e2e2] bg-[#f2f2f2] leading-[22px]">文件列表</button>
      </div>
    </aside>
  );
}

export default function App() {
  return (
    <div className="flex h-screen flex-col overflow-hidden bg-[#efefef]">
      <TitleBar />
      <MenuBar />
      <Toolbar />
      <main className="flex min-h-0 flex-1 gap-1.5">
        <Canvas />
        <LabelDock />
      </main>
      <footer className="h-7 shrink-0" />
    </div>
  );
}
